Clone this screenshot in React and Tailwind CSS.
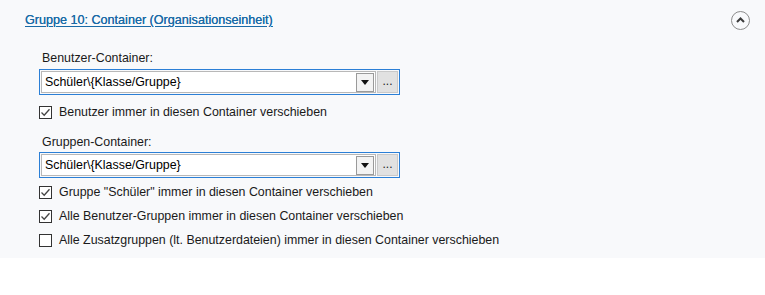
import React from "react";

function Check({ checked, label, className = "" }) {
  return (
    <label className={`flex items-center h-[14px] gap-[7px] ${className}`}>
      <span className="w-[13px] h-[13px] border border-[#333] bg-white flex items-center justify-center shrink-0">
        {checked && (
          <svg width="11" height="11" viewBox="0 0 11 11">
            <path d="M1.5 5.5 L4.2 8.2 L9.5 2.2" fill="none" stroke="#444" strokeWidth="1.3" />
          </svg>
        )}
      </span>
      <span className="text-[12.4px] leading-[14px] text-[#1a1a1a]">{label}</span>
    </label>
  );
}

function ContainerSelect({ value }) {
  return (
    <div className="w-[361px] h-[26px] border border-[#2b7fd6] p-[1px] flex gap-[1px]">
      <div className="flex-1 h-full border border-[#b8b8b8] bg-white flex items-center justify-between pl-[3px] pr-[1px]">
        <span className="text-[12.4px] leading-[14px] text-black">{value}</span>
        <span className="w-[18px] h-[19px] border border-[#9a9a9a] bg-[#f3f3f3] flex items-center justify-center">
          <svg width="8" height="5" viewBox="0 0 8 5">
            <path d="M0 0 H8 L4 5 Z" fill="#111" />
          </svg>
        </span>
      </div>
      <button
        type="button"
        className="w-[21px] h-full bg-[#e1e1e1] border border-[#c9c9c9] text-[12px] leading-[12px] text-[#222] flex items-end justify-center pb-[5px]"
      >
        ...
      </button>
    </div>
  );
}

export default function App() {
  return (
    <div className="w-[765px] h-[295px] bg-white font-['Liberation_Sans',Arial,sans-serif]">
      <section className="bg-[#f8f9fb] pb-[11px]">
        <div className="h-[40px] flex items-center justify-between pl-[25px] pr-[15px]">
          <a href="#" className="text-[12.6px] leading-[14px] text-[#1a6aa6] underline underline-offset-2 [text-shadow:0_0_0.5px_#1a6aa6]">
            Gruppe 10: Container (Organisationseinheit)
          </a>
          <button
            type="button"
            className="w-[19px] h-[19px] rounded-full border-[1.5px] border-[#8c8c8c] flex items-center justify-center"
            aria-label="Einklappen"
          >
            <svg width="9" height="6" viewBox="0 0 9 6">
              <path d="M1 5 L4.5 1.5 L8 5" fill="none" stroke="#3a3a3a" strokeWidth="2" />
            </svg>
          </button>
        </div>

        <div className="pl-[39px]">
          <div className="mt-[11px] h-[14px] text-[12.4px] leading-[14px] text-[#1a1a1a] pl-[3px]">
            Benutzer-Container:
          </div>
          <div className="mt-[4px]">
            <ContainerSelect value="Schüler\{Klasse/Gruppe}" />
          </div>
          <Check checked label="Benutzer immer in diesen Container verschieben" className="mt-[10px]" />

          <div className="mt-[16px] h-[14px] text-[12.4px] leading-[14px] text-[#1a1a1a] pl-[3px]">
            Gruppen-Container:
          </div>
          <div className="mt-[3px]">
            <ContainerSelect value="Schüler\{Klasse/Gruppe}" />
          </div>
          <Check checked label={'Gruppe "Schüler" immer in diesen Container verschieben'} className="mt-[7px]" />
          <Check checked label="Alle Benutzer-Gruppen immer in diesen Container verschieben" className="mt-[10px]" />
          <Check label="Alle Zusatzgruppen (lt. Benutzerdateien) immer in diesen Container verschieben" className="mt-[10px]" />
        </div>
      </section>
    </div>
  );
}
